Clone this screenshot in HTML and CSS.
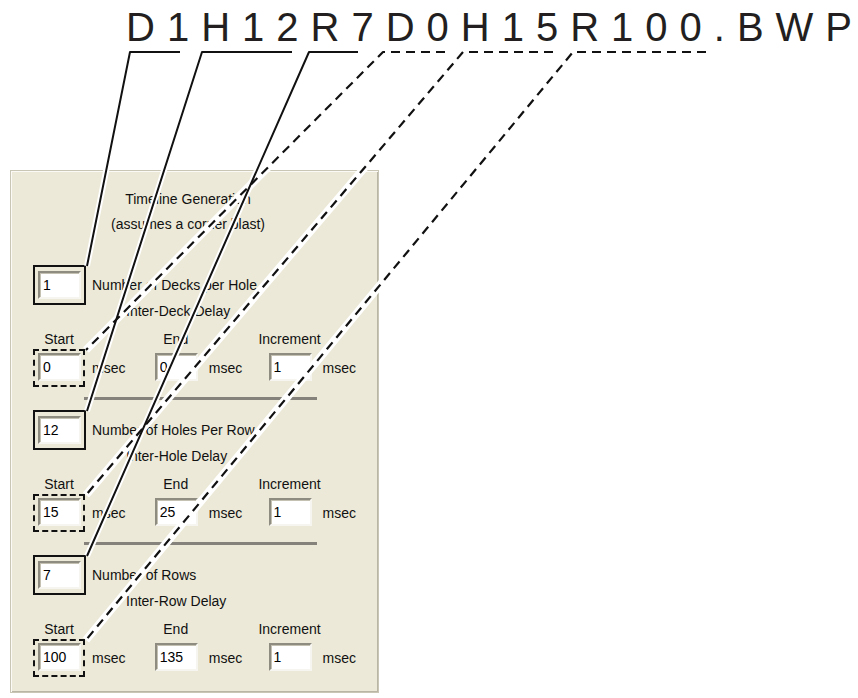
FILE: index.html
```html
<!DOCTYPE html>
<html lang="en">
<head>
    <meta charset="UTF-8">
    <meta name="viewport" content="width=device-width, initial-scale=1.0">
    <title>Timeline Generation</title>
    <link rel="stylesheet" href="styles.css">
</head>
<body>
    <div class="sheet">
        <h1 class="code">D1H12R7D0H15R100.BW<span class="last">P</span></h1>

        <div class="panel">
            <div class="head">
                <div>Timeline Generation</div>
                <div>(assumes a corner blast)</div>
            </div>

            <div class="section">
                <div class="count">
                    <span class="slot solid"><input class="box" type="text" value="1"></span>
                    <span class="count-label">Number of Decks per Hole</span>
                </div>
                <div class="sub">Inter-Deck Delay</div>
                <div class="delays">
                    <div class="field first">
                        <span class="cap">Start</span>
                        <div class="line"><span class="slot dashed"><input class="box" type="text" value="0"></span><span class="unit">msec</span></div>
                    </div>
                    <div class="field second">
                        <span class="cap">End</span>
                        <div class="line"><span class="slot"><input class="box" type="text" value="0"></span><span class="unit">msec</span></div>
                    </div>
                    <div class="field">
                        <span class="cap">Increment</span>
                        <div class="line"><span class="slot"><input class="box" type="text" value="1"></span><span class="unit">msec</span></div>
                    </div>
                </div>
            </div>
            <hr class="rule">

            <div class="section">
                <div class="count">
                    <span class="slot solid"><input class="box" type="text" value="12"></span>
                    <span class="count-label">Number of Holes Per Row</span>
                </div>
                <div class="sub">Inter-Hole Delay</div>
                <div class="delays">
                    <div class="field first">
                        <span class="cap">Start</span>
                        <div class="line"><span class="slot dashed"><input class="box" type="text" value="15"></span><span class="unit">msec</span></div>
                    </div>
                    <div class="field second">
                        <span class="cap">End</span>
                        <div class="line"><span class="slot"><input class="box" type="text" value="25"></span><span class="unit">msec</span></div>
                    </div>
                    <div class="field">
                        <span class="cap">Increment</span>
                        <div class="line"><span class="slot"><input class="box" type="text" value="1"></span><span class="unit">msec</span></div>
                    </div>
                </div>
            </div>
            <hr class="rule">

            <div class="section">
                <div class="count">
                    <span class="slot solid"><input class="box" type="text" value="7"></span>
                    <span class="count-label">Number of Rows</span>
                </div>
                <div class="sub">Inter-Row Delay</div>
                <div class="delays">
                    <div class="field first">
                        <span class="cap">Start</span>
                        <div class="line"><span class="slot dashed"><input class="box" type="text" value="100"></span><span class="unit">msec</span></div>
                    </div>
                    <div class="field second">
                        <span class="cap">End</span>
                        <div class="line"><span class="slot"><input class="box" type="text" value="135"></span><span class="unit">msec</span></div>
                    </div>
                    <div class="field">
                        <span class="cap">Increment</span>
                        <div class="line"><span class="slot"><input class="box" type="text" value="1"></span><span class="unit">msec</span></div>
                    </div>
                </div>
            </div>
        </div>

        <!-- leader lines from the file name down to the fields -->
        <svg class="links" width="858" height="698" viewBox="0 0 858 698">
            <g class="halo">
                <path d="M180 52 H130 L87 266"/>
                <path d="M292 52 H202 L87 411"/>
                <path d="M358 52 H309 L87 556"/>
                <path class="wide" d="M445 52 H383 L86 350"/>
                <path class="wide" d="M553 52 H463 L86 495"/>
                <path class="wide" d="M706 52 H573 L86 640"/>
            </g>
            <g class="ink">
                <path d="M180 52 H130 L87 266"/>
                <path d="M292 52 H202 L87 411"/>
                <path d="M358 52 H309 L87 556"/>
                <path class="dash" d="M445 52 H383 L86 350"/>
                <path class="dash" d="M553 52 H463 L86 495"/>
                <path class="dash" d="M706 52 H573 L86 640"/>
            </g>
        </svg>
    </div>
</body>
</html>
```

FILE: styles.css
```css
body {
    margin: 0;
    padding: 0;
    background-color: #fff;
    font-family: "Liberation Sans", Arial, sans-serif;
}
.sheet {
    position: relative;
    width: 858px;
    height: 698px;
    overflow: hidden;
}
.code {
    margin: 0;
    padding: 7px 0 0 126px;
    font-size: 40px;
    line-height: 40px;
    font-weight: normal;
    letter-spacing: 12px;
    color: #231f20;
    white-space: nowrap;
}
.code .last {
    letter-spacing: 0;
}
.panel {
    width: 323px;
    margin: 123px 0 0 10px;
    padding: 16px 22px 15px 22px;
    border: 1px solid #c9c6b6;
    box-shadow: inset 1px 1px 0 #fbfaf6, inset -1px -1px 0 #b9b6a6;
    background-color: #ece9d8;
    font-size: 14px;
    color: #111;
}
.head {
    margin: 0 13px 28px 0;
    text-align: center;
    line-height: 25px;
}
.count {
    display: flex;
    align-items: center;
}
.count-label {
    margin-left: 6px;
    white-space: nowrap;
}
.slot {
    display: inline-flex;
    border: 2px dashed transparent;
    padding: 2px 2px 4px 3px;
}
.slot.solid {
    border: 2px solid #111;
    padding: 4px 3px;
}
.slot.dashed {
    border-color: #111;
}
.box {
    width: 43px;
    height: 28px;
    box-sizing: border-box;
    margin: 0;
    padding: 0 3px;
    border: 2px solid;
    border-color: #8e8c80 #f6f5f0 #f6f5f0 #8e8c80;
    box-shadow: inset 1px 1px 0 #c4c1b2;
    background-color: #fff;
    font-family: "Liberation Sans", Arial, sans-serif;
    font-size: 14px;
    color: #000;
    outline: none;
}
.sub {
    height: 12px;
    line-height: 12px;
    padding-left: 93px;
    white-space: nowrap;
}
.delays {
    display: flex;
    margin-top: 14px;
}
.field {
    display: flex;
    flex-direction: column;
}
.field.first {
    width: 118px;
}
.field.second {
    width: 115px;
}
.cap {
    display: flex;
    justify-content: center;
    width: 52px;
    height: 16px;
    line-height: 16px;
    margin-bottom: 2px;
    white-space: nowrap;
}
.line {
    display: flex;
    align-items: center;
}
.unit {
    margin-left: 7px;
}
.rule {
    width: 233px;
    height: 0;
    margin: 10px 0 10px 51px;
    border: none;
    border-top: 3px solid #84827a;
}
.links {
    position: absolute;
    top: 0;
    left: 0;
    pointer-events: none;
}
.links path {
    fill: none;
    stroke-linejoin: round;
}
.halo path {
    stroke: #fff;
    stroke-width: 6;
}
.halo path.wide {
    stroke-width: 8;
}
.ink path {
    stroke: #111;
    stroke-width: 2;
}
.ink path.dash {
    stroke-width: 2.2;
    stroke-dasharray: 9 6;
}
```
